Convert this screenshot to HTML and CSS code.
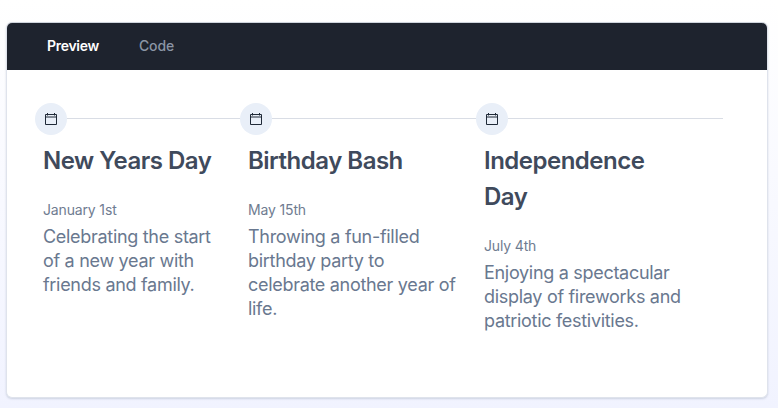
FILE: index.html
```html
<!DOCTYPE html>
<html lang="en">
<head>
<meta charset="utf-8">
<title>Timeline</title>
<link rel="stylesheet" href="styles.css">
</head>
<body>
<main class="card">
  <nav class="tabs">
    <span class="tab tab-active">Preview</span>
    <span class="tab">Code</span>
  </nav>
  <ol class="timeline">
    <li class="event event-a">
      <div class="marker">
        <span class="dot"><svg class="icon" viewBox="0 0 14 14"><path d="M1.5 2.5h11v10h-11zM1.5 5h11M3.5 1v2.5M10.5 1v2.5"/></svg></span>
        <span class="line"></span>
      </div>
      <div class="body">
        <h3>New Years Day</h3>
        <time>January 1st</time>
        <p>Celebrating the start of a new year with friends and family.</p>
      </div>
    </li>
    <li class="event event-b">
      <div class="marker">
        <span class="dot"><svg class="icon" viewBox="0 0 14 14"><path d="M1.5 2.5h11v10h-11zM1.5 5h11M3.5 1v2.5M10.5 1v2.5"/></svg></span>
        <span class="line"></span>
      </div>
      <div class="body">
        <h3>Birthday Bash</h3>
        <time>May 15th</time>
        <p>Throwing a fun-filled birthday party to celebrate another year of life.</p>
      </div>
    </li>
    <li class="event event-c">
      <div class="marker">
        <span class="dot"><svg class="icon" viewBox="0 0 14 14"><path d="M1.5 2.5h11v10h-11zM1.5 5h11M3.5 1v2.5M10.5 1v2.5"/></svg></span>
        <span class="line"></span>
      </div>
      <div class="body">
        <h3>Independence Day</h3>
        <time>July 4th</time>
        <p>Enjoying a spectacular display of fireworks and patriotic festivities.</p>
      </div>
    </li>
  </ol>
</main>
</body>
</html>
```
FILE: styles.css
```css
* { box-sizing: border-box; }
html, body { height: 100%; }
body {
  margin: 0;
  padding: 22px 10px 0 6px;
  overflow: hidden;
  font-family: Inter, sans-serif;
  background: linear-gradient(#ffffff 0%, #f1f3ff 100%);
}
.card {
  height: 376px;
  background: #fff;
  border: 1px solid #dfe3ec;
  border-top-color: #cfd4dc;
  border-radius: 6px;
  box-shadow: 0 1px 2px rgba(100, 116, 139, .25);
  overflow: hidden;
}
.tabs {
  height: 47px;
  background: #1e232e;
  display: flex;
  align-items: center;
  padding: 0 0 2px 40px;
  gap: 40px;
  margin-bottom: 33px;
}
.tab { font-size: 14px; letter-spacing: -.1px; color: #8b95a5; font-weight: 500; }
.tab-active { color: #fff; font-weight: 600; letter-spacing: -.3px; }
.timeline {
  list-style: none;
  margin: 0;
  padding: 0 0 0 28px;
  display: flex;
}
.event-a { width: 205px; }
.event-b { width: 236px; }
.event-c { width: 247px; }
.marker { display: flex; align-items: center; }
.dot {
  width: 32px;
  height: 32px;
  border-radius: 50%;
  background: #e9eff8;
  display: flex;
  align-items: center;
  justify-content: center;
  flex: none;
}
.icon { width: 14px; height: 14px; fill: none; stroke: #1f2937; stroke-width: 1; }
.line { flex: 1; height: 1px; background: #d9dde5; transform: translateY(-1px); }
.body { padding: 8px 20px 0 8px; }
.event-b .body { padding-right: 16px; }
.event-c .body { padding-right: 39px; }
h3 {
  margin: 0 0 21px;
  font-size: 24px;
  line-height: 36px;
  font-weight: 600;
  letter-spacing: -.5px;
  color: #3f4a5c;
}
time { display: block; font-size: 14px; line-height: 20px; letter-spacing: -.15px; color: #6f7c91; margin-bottom: 5px; }
p { margin: 0; font-size: 18px; line-height: 24px; letter-spacing: -.3px; color: #69788f; }
```
